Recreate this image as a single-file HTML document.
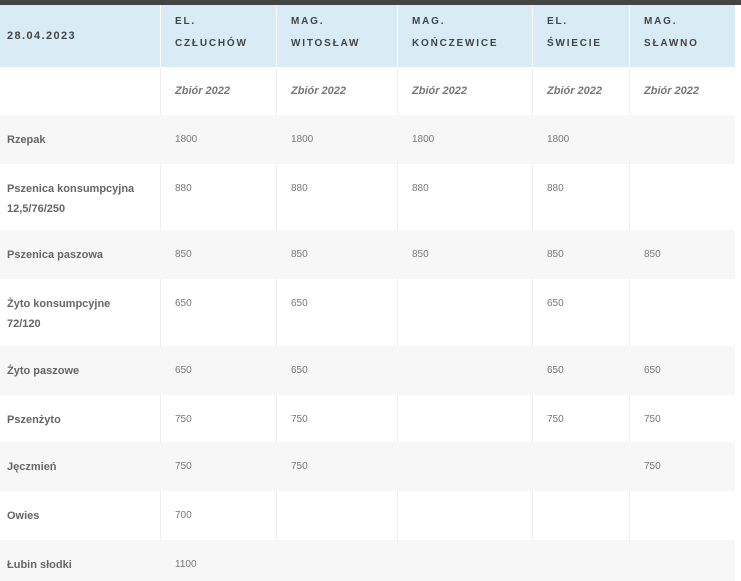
<!DOCTYPE html>
<html><head><meta charset="utf-8"><style>
body{margin:0;width:741px;height:581px;overflow:hidden;background:#fff;font-family:"Liberation Sans",sans-serif;position:relative}
.bar{position:absolute;left:0;top:0;width:741px;height:5px;background:#444}
.r{position:absolute;left:0;width:735px}
.c{position:absolute;top:0;bottom:0;box-sizing:border-box;padding:15px 0 0 14px;line-height:20px;font-size:10px;color:#777}
.c:first-child{padding-left:7px;font-weight:bold;font-size:11px;color:#666}
.w .c{border-right:1px solid #eee}
.g{background:#f7f7f7}
.h{background:#d9ecf6}
.h .c{border-right:1px solid #fff;padding-top:6px;line-height:22px;font-weight:bold;font-size:10px;color:#444;letter-spacing:1.8px}
.h .c:first-child{padding-top:20px;font-size:11px;letter-spacing:1.4px}
.z .c{font-style:italic;font-weight:bold;font-size:11px;color:#777;padding-top:14px}
.c1{left:0;width:161px}.c2{left:161px;width:116px}.c3{left:277px;width:121px}.c4{left:398px;width:135px}.c5{left:533px;width:97px}.c6{left:630px;width:105px;border-right:none!important}
</style></head><body>
<div class="bar"></div>
<div class="r h" style="top:5px;height:62px"><div class="c c1">28.04.2023</div><div class="c c2">EL.<br>CZŁUCHÓW</div><div class="c c3">MAG.<br>WITOSŁAW</div><div class="c c4">MAG.<br>KOŃCZEWICE</div><div class="c c5">EL.<br>ŚWIECIE</div><div class="c c6">MAG.<br>SŁAWNO</div></div>
<div class="r w z" style="top:67px;height:48px"><div class="c c1"></div><div class="c c2">Zbiór 2022</div><div class="c c3">Zbiór 2022</div><div class="c c4">Zbiór 2022</div><div class="c c5">Zbiór 2022</div><div class="c c6">Zbiór 2022</div></div>
<div class="r g" style="top:115px;height:49px"><div class="c c1">Rzepak</div><div class="c c2">1800</div><div class="c c3">1800</div><div class="c c4">1800</div><div class="c c5">1800</div><div class="c c6"></div></div>
<div class="r w" style="top:164px;height:66px"><div class="c c1">Pszenica konsumpcyjna<br>12,5/76/250</div><div class="c c2">880</div><div class="c c3">880</div><div class="c c4">880</div><div class="c c5">880</div><div class="c c6"></div></div>
<div class="r g" style="top:230px;height:49px"><div class="c c1">Pszenica paszowa</div><div class="c c2">850</div><div class="c c3">850</div><div class="c c4">850</div><div class="c c5">850</div><div class="c c6">850</div></div>
<div class="r w" style="top:279px;height:67px"><div class="c c1">Żyto konsumpcyjne<br>72/120</div><div class="c c2">650</div><div class="c c3">650</div><div class="c c4"></div><div class="c c5">650</div><div class="c c6"></div></div>
<div class="r g" style="top:346px;height:49px"><div class="c c1">Żyto paszowe</div><div class="c c2">650</div><div class="c c3">650</div><div class="c c4"></div><div class="c c5">650</div><div class="c c6">650</div></div>
<div class="r w" style="top:395px;height:47px"><div class="c c1">Pszenżyto</div><div class="c c2">750</div><div class="c c3">750</div><div class="c c4"></div><div class="c c5">750</div><div class="c c6">750</div></div>
<div class="r g" style="top:442px;height:49px"><div class="c c1">Jęczmień</div><div class="c c2">750</div><div class="c c3">750</div><div class="c c4"></div><div class="c c5"></div><div class="c c6">750</div></div>
<div class="r w" style="top:491px;height:49px"><div class="c c1">Owies</div><div class="c c2">700</div><div class="c c3"></div><div class="c c4"></div><div class="c c5"></div><div class="c c6"></div></div>
<div class="r g" style="top:540px;height:41px"><div class="c c1">Łubin słodki</div><div class="c c2">1100</div><div class="c c3"></div><div class="c c4"></div><div class="c c5"></div><div class="c c6"></div></div>
</body></html>
